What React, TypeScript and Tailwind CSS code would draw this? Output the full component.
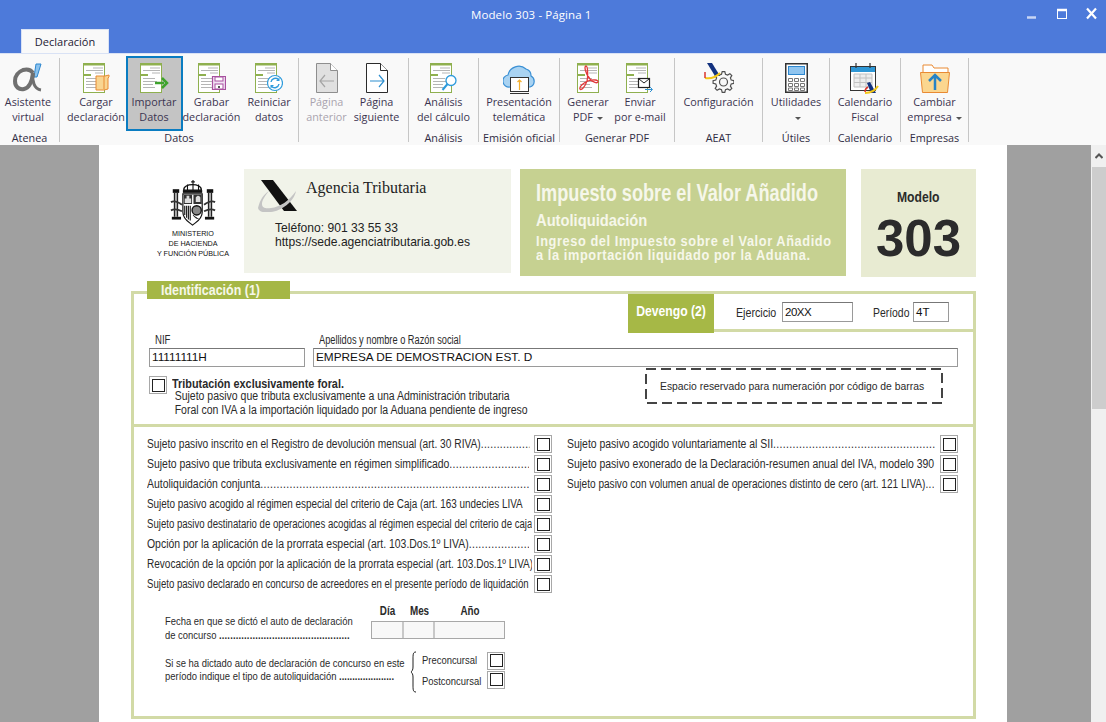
import React from "react";

const Doc = () => (
  <g>
    <rect x="0.5" y="0.5" width="21" height="29" fill="#fff" stroke="#8fb04f" />
    <rect x="0" y="0" width="22" height="2.5" fill="#8fb04f" />
    <rect x="0" y="11" width="8" height="2" fill="#8fb04f" />
    <path d="M10 5h10M3 7.5h17M12 10h8M3 15.5h12M3 18.5h14M3 21.5h10M3 24.5h12" stroke="#b5b5b5" />
  </g>
);

const Cargar = () => (
  <svg width="27" height="30" viewBox="0 0 27 30">
    <Doc />
    <path d="M13 13h9l4 -1v2l-1 1v11l-4 1h-8z" fill="#f9d591" stroke="#e98a33" />
    <path d="M21 13v13" stroke="#e98a33" />
  </svg>
);
const Importar = () => (
  <svg width="29" height="30" viewBox="0 0 29 30">
    <Doc />
    <path d="M15 20h9" stroke="#3ea32d" strokeWidth="2.5" />
    <path d="M22 15l5 5l-5 5" stroke="#3ea32d" strokeWidth="2.5" fill="none" />
  </svg>
);
const Grabar = () => (
  <svg width="28" height="30" viewBox="0 0 28 30">
    <Doc />
    <path d="M14.5 13.5h13v13h-13z" fill="#f2e3f4" stroke="#a8519f" strokeWidth="1.2" />
    <rect x="17" y="14" width="8" height="4" fill="#fff" stroke="#a8519f" />
    <rect x="17" y="21" width="8" height="5" fill="#fff" stroke="#a8519f" />
    <rect x="20" y="23" width="2" height="2" fill="#555" />
  </svg>
);
const Reiniciar = () => (
  <svg width="28" height="30" viewBox="0 0 28 30">
    <Doc />
    <circle cx="20" cy="20" r="7.5" fill="#fff" stroke="#2e9bdc" strokeWidth="1.2" />
    <path d="M16 19a4.5 4.5 0 0 1 7.5 -2.5M24 21a4.5 4.5 0 0 1 -7.5 2.5" fill="none" stroke="#2e9bdc" strokeWidth="1.4" />
    <path d="M24.5 14.5v3.5h-3.5zM15.5 25.5v-3.5h3.5z" fill="#2e9bdc" />
  </svg>
);
const Analisis = () => (
  <svg width="28" height="30" viewBox="0 0 28 30">
    <Doc />
    <circle cx="21" cy="17.5" r="5" fill="#fff" stroke="#2e9bdc" strokeWidth="1.3" />
    <path d="M17.5 21l-5 6" stroke="#2e9bdc" strokeWidth="2" />
  </svg>
);
const PageIcon = ({ on }: { on: boolean }) => {
  const s = on ? "#2b2b2b" : "#8e8e8e";
  const a = on ? "#2e8fd0" : "#a4a4a4";
  return (
    <svg width="22" height="30" viewBox="0 0 22 30">
      <path d="M0.5 0.5h14l7 7v22h-21z" fill={on ? "#fff" : "#e0e0e0"} stroke={s} />
      <path d="M14.5 0.5v7h7" fill="#fff" stroke={s} />
      {on ? (
        <path d="M4 18h14M13 12l5 6l-5 6" stroke={a} fill="none" strokeWidth="1.2" />
      ) : (
        <path d="M18 18h-14M9 12l-5 6l5 6" stroke={a} fill="none" strokeWidth="1.2" />
      )}
    </svg>
  );
};
const Cloud = () => (
  <svg width="33" height="31" viewBox="0 0 33 31">
    <path d="M7 24a6 6 0 0 1 -2 -12a11 11 0 0 1 18 -6a7 7 0 0 1 5 7a6 6 0 0 1 -1 11z" fill="#a9d3f2" stroke="#3b90d4" strokeWidth="1.2" />
    <rect x="7.5" y="14.5" width="18" height="14" fill="#fff" stroke="#333" />
    <path d="M7 30.5h19" stroke="#333" />
    <path d="M16.5 27v-10M14.5 19l2 -2l2 2" stroke="#f4b02e" fill="none" strokeWidth="1.2" />
  </svg>
);
const Pdf = () => (
  <svg width="22" height="30" viewBox="0 0 22 30">
    <Doc />
    <path d="M9 3c-2 0 -1 7 4 13c2 2.500 7 5 8 3c1 -2 -5 -3 -10 -1c-5 2 -9 6 -8 8c1 2 5 -2 7 -8c1 -4 1 -15 -1 -15z" fill="none" stroke="#e2393b" strokeWidth="1.3" />
  </svg>
);
const Enviar = () => (
  <svg width="28" height="30" viewBox="0 0 28 30">
    <Doc />
    <rect x="12.500" y="15.500" width="11" height="9" fill="#fff" stroke="#222" strokeWidth="1.2" />
    <path d="M13 16l5 4l5 -4" fill="none" stroke="#222" />
    <path d="M19 26.500h7M24 24l2.500 2.500l-2.500 2.500" stroke="#2e8fd0" fill="none" />
  </svg>
);
const Alpha = () => (
  <svg width="30" height="30" viewBox="0 0 30 30">
    <path d="M23 1h5l-4 13h-3z" fill="#8cc3ee" stroke="#2d87cf" />
    <path d="M20 10c-1 8 1 16 8 17" fill="none" stroke="#707070" strokeWidth="3" />
    <path d="M20 10c-2 -3 -6 -4 -10 -3c-5 2 -8 6 -8 11c0 6 4 9 9 8c5 -1 8 -8 9 -16" fill="none" stroke="#707070" strokeWidth="4" />
  </svg>
);
const gear = (() => {
  const cx = 19.5, cy = 19, n = 8;
  const pts: string[] = [];
  for (let i = 0; i < n; i++) {
    const a = (i / n) * Math.PI * 2;
    const step = (Math.PI * 2) / n;
    const list: [number, number][] = [
      [8, a - step * 0.32],
      [10.5, a - step * 0.16],
      [10.5, a + step * 0.16],
      [8, a + step * 0.32],
    ];
    list.forEach(([r, t]) => pts.push((cx + r * Math.cos(t)).toFixed(1) + "," + (cy + r * Math.sin(t)).toFixed(1)));
  }
  return pts.join(" ");
})();
const Config = () => (
  <svg width="30" height="30" viewBox="0 0 30 30">
    <polygon points={gear} fill="#f9f9f9" stroke="#4f4f4f" strokeWidth="1.2" />
    <circle cx="19.500" cy="19" r="4" fill="none" stroke="#4f4f4f" strokeWidth="1.2" />
    <path d="M3 0h5l8 13h-5z" fill="#13327f" />
    <path d="M1 15c5 1 11 -1 15 -5" stroke="#f3c718" strokeWidth="2" fill="none" />
    <path d="M1 9l0 6" stroke="#d8342b" strokeWidth="1.500" />
  </svg>
);
const Calc = () => (
  <svg width="23" height="30" viewBox="0 0 23 30">
    <rect x="0.750" y="0.750" width="21.500" height="28.500" fill="#fff" stroke="#333" strokeWidth="1.500" />
    <rect x="3.500" y="3.500" width="16" height="8" fill="#90c5ef" stroke="#2d87cf" />
    <path d="M3.500 15.500h4v3h-4zM9.500 15.500h4v3h-4zM15.500 15.500h4v3h-4zM3.500 20.500h4v3h-4zM9.500 20.500h4v3h-4zM15.500 20.500h4v3h-4zM3.500 25h4v2.500h-4zM9.500 25h4v2.500h-4zM15.500 25h4v2.500h-4z" fill="none" stroke="#777" />
  </svg>
);
const Calendar = () => (
  <svg width="30" height="31" viewBox="0 0 30 31">
    <rect x="0.500" y="3.500" width="25" height="24" fill="#fff" stroke="#333" />
    <rect x="1" y="4" width="24" height="5" fill="#2f97d5" />
    <path d="M6 0v5M20 0v5" stroke="#333" strokeWidth="1.200" />
    <path d="M4 11h18v13h-18zM4 15h18M4 19.500h18M10 11v13M16 11v13" fill="#eee" stroke="#c2c2c2" />
    <path d="M17 20l3 -1l6 11h-5z" fill="#13327f" />
    <path d="M15 30c5 0 10 -2 13 -7" stroke="#f3c718" strokeWidth="2" fill="none" />
    <path d="M18 24c-2 1 -3 3 -3 5" stroke="#d8342b" strokeWidth="1.500" fill="none" />
  </svg>
);
const Folder = () => (
  <svg width="30" height="30" viewBox="0 0 30 30">
    <path d="M3 9v-7h9l2 3h14v4" fill="#fff" stroke="#e98a33" />
    <path d="M0.500 9.500h29l-2 20h-25z" fill="#fbd68f" stroke="#e98a33" />
    <path d="M15 27v-15M9 18l6 -6l6 6" fill="none" stroke="#2683c6" strokeWidth="2.500" />
  </svg>
);

type Btn = { a: string; b?: string; w: number; icon: React.ReactNode; off?: boolean; sel?: boolean; caret?: boolean };
type Grp = { w: number; label?: string; btns: Btn[]; pad?: string };

const groups: Grp[] = [
  { w: 60, pad: "pr-[3px]", label: "Atenea", btns: [{ a: "Asistente", b: "virtual", w: 57, icon: <Alpha /> }] },
  {
    w: 239,
    pad: "pl-[6px]",
    label: "Datos",
    btns: [
      { a: "Cargar", b: "declaración", w: 59, icon: <Cargar /> },
      { a: "Importar", b: "Datos", w: 57, icon: <Importar />, sel: true },
      { a: "Grabar", b: "declaración", w: 58, icon: <Grabar /> },
      { a: "Reiniciar", b: "datos", w: 57, icon: <Reiniciar /> },
    ],
  },
  {
    w: 110,
    pad: "pr-[4px]",
    btns: [
      { a: "Página", b: "anterior", w: 50, icon: <PageIcon on={false} />, off: true },
      { a: "Página", b: "siguiente", w: 50, icon: <PageIcon on={true} /> },
    ],
  },
  { w: 70, label: "Análisis", btns: [{ a: "Análisis", b: "del cálculo", w: 66, icon: <Analisis /> }] },
  { w: 81, label: "Emisión oficial", btns: [{ a: "Presentación", b: "telemática", w: 76, icon: <Cloud /> }] },
  {
    w: 115,
    pad: "pr-[6px]",
    label: "Generar PDF",
    btns: [
      { a: "Generar", b: "PDF", w: 52, icon: <Pdf />, caret: true },
      { a: "Enviar", b: "por e-mail", w: 52, icon: <Enviar /> },
    ],
  },
  { w: 88, label: "AEAT", btns: [{ a: "Configuración", w: 80, icon: <Config /> }] },
  { w: 67, label: "Útiles", btns: [{ a: "Utilidades", w: 60, icon: <Calc />, caret: true }] },
  { w: 71, label: "Calendario", btns: [{ a: "Calendario", b: "Fiscal", w: 64, icon: <Calendar /> }] },
  { w: 68, label: "Empresas", btns: [{ a: "Cambiar", b: "empresa", w: 62, icon: <Folder />, caret: true }] },
];

const Caret = () => <span className="inline-block ml-1 align-middle w-0 h-0 border-x-[3px] border-x-transparent border-t-[3px] border-t-[#555]" />;

const RibbonButton = ({ b }: { b: Btn }) => (
  <div
    className={
      "flex flex-col items-center h-[75px] pt-[5px] border-2 box-border shrink-0 " +
      (b.sel ? "border-[#0a7cc1] bg-[#c4c4c4]" : "border-transparent")
    }
    style={{ width: b.w }}
  >
    <div className="h-[31px] flex items-start justify-center">{b.icon}</div>
    <div className={"text-center leading-[15px] whitespace-nowrap " + (b.off ? "text-[#a9a4ae]" : "text-[#3b3450]")}>
      <div>{b.a}</div>
      <div>
        {b.b}
        {b.caret && <Caret />}
      </div>
    </div>
  </div>
);

const Ribbon = () => (
  <div className="h-[92px] bg-[#f9f9f9] border-t border-t-[#d9e2f5] flex font-['Open_Sans',sans-serif] text-[10.8px]">
    {groups.map((g, i) => (
      <div key={i} className="flex flex-col border-r border-r-[#c6c6c6] h-[84px] mt-[4px] box-border shrink-0" style={{ width: g.w }}>
        <div className={"flex justify-center h-[75px] -mt-[2px] " + (g.pad ?? "")}>
          {g.btns.map((b, j) => (
            <RibbonButton key={j} b={b} />
          ))}
        </div>
        <div className="text-center text-[#302c44] leading-[14px] whitespace-nowrap">{g.label}</div>
      </div>
    ))}
  </div>
);

const Check = () => (
  <div className="w-[18px] h-[18px] border border-[#a8a8a8] flex items-center justify-center shrink-0 bg-white">
    <div className="w-[13px] h-[13px] border border-[#222]" />
  </div>
);

type RowD = { t: string; dots?: boolean; c: string };

const Row = ({ t, dots, c, w }: RowD & { w: number }) => (
  <div className="flex items-center h-[20px]" style={{ width: w }}>
    <div className="flex-1 min-w-0 overflow-hidden mr-[2px]">
      <div className={"origin-left flex overflow-hidden whitespace-nowrap leading-[18px] " + c}>
        <span className="shrink-0">{t}</span>
        {dots && <span className="overflow-hidden mr-[4px] tracking-[0.4px]">{".".repeat(120)}</span>}
      </div>
    </div>
    <Check />
  </div>
);

const left: RowD[] = [
  { t: "Sujeto pasivo inscrito en el Registro de devolución mensual (art. 30 RIVA)", dots: true, c: "w-[118%] scale-x-[.85]" },
  { t: "Sujeto pasivo que tributa exclusivamente en régimen simplificado", dots: true, c: "w-[115%] scale-x-[.87]" },
  { t: "Autoliquidación conjunta", dots: true, c: "w-[115%] scale-x-[.87]" },
  { t: "Sujeto pasivo acogido al régimen especial del criterio de Caja (art. 163 undecies LIVA", c: "w-[122%] scale-x-[.825]" },
  { t: "Sujeto pasivo destinatario de operaciones acogidas al régimen especial del criterio de caja", c: "w-[125%] scale-x-[.8]" },
  { t: "Opción por la aplicación de la prorrata especial (art. 103.Dos.1º LIVA)", dots: true, c: "w-[115%] scale-x-[.87]" },
  { t: "Revocación de la opción por la aplicación de la prorrata especial (art. 103.Dos.1º LIVA)", c: "w-[120%] scale-x-[.835]" },
  { t: "Sujeto pasivo declarado en concurso de acreedores en el presente período de liquidación", c: "w-[125%] scale-x-[.8]" },
];
const right: RowD[] = [
  { t: "Sujeto pasivo acogido voluntariamente al SII", dots: true, c: "w-[115%] scale-x-[.87]" },
  { t: "Sujeto pasivo exonerado de la Declaración-resumen anual del IVA, modelo 390", c: "w-[115%] scale-x-[.87]" },
  { t: "Sujeto pasivo con volumen anual de operaciones distinto de cero (art. 121 LIVA)", dots: true, c: "w-[119%] scale-x-[.84]" },
];

const Crest = () => (
  <svg width="50" height="50" viewBox="0 0 50 50">
    <path d="M15 11c-1 -8 20 -8 19 0z" fill="#fff" stroke="#111" strokeWidth="1.500" />
    <path d="M25 0v5M23 2h4M19 5v6M25 5v6M31 5v6" stroke="#111" strokeWidth="1.200" />
    <rect x="14" y="11" width="21" height="3" fill="#111" />
    <rect x="3" y="10" width="7" height="4" fill="#111" />
    <rect x="40" y="10" width="7" height="4" fill="#111" />
    <path d="M5 14v26M8 14v26M42 14v26M45 14v26" stroke="#222" strokeWidth="1.700" />
    <path d="M1 24c4 -2 8 0 12 3M49 24c-4 -2 -8 0 -12 3M1 33c4 -2 8 -1 12 1M49 33c-4 -2 -8 -1 -12 1" stroke="#333" strokeWidth="2" fill="none" />
    <rect x="2" y="40" width="10" height="3" fill="#111" />
    <rect x="38" y="40" width="10" height="3" fill="#111" />
    <path d="M14 15h21v20c0 8 -7 11 -10.500 14c-3.500 -3 -10.500 -6 -10.500 -14z" fill="#fff" stroke="#111" strokeWidth="1.300" />
    <path d="M15 16h9v10h-9zM25.500 16h9v10h-9z" fill="#333" />
    <path d="M18 17h3v3h2v5h-7v-5h2zM28 19c2 -3 4 -2 5 0v5h-5z" fill="#ddd" />
    <path d="M16 28v10M18 28v13M20 28v15M22 28v16" stroke="#222" strokeWidth="1.300" />
    <circle cx="29" cy="33" r="5" fill="#888" stroke="#111" strokeWidth="1.500" />
    <path d="M25 38c2 3 4 4 6 4" stroke="#333" />
  </svg>
);

const Agency = () => (
  <svg width="40" height="32" viewBox="0 0 40 32" className="shrink-0">
    <path d="M3 0h12l24 31h-13z" fill="#111" />
    <path d="M0 28c2 -8 5 -13 11 -17c-4 5 -7 9 -7 13c0 4 4 5 9 4c9 -1 18 -7 25 -17c-2 11 -15 20 -25 21c-7 1 -12 0 -13 -4z" fill="#c4c4c4" />
  </svg>
);

const narrow = "font-['Liberation_Sans',sans-serif]";

export default function App() {
  return (
    <div className="w-[1106px] h-[722px] overflow-hidden flex flex-col bg-[#a0a0a0]">
      <div className="h-[53px] bg-[#4d7ada] flex flex-col shrink-0">
        <div className="flex h-[29px] items-start font-['Open_Sans',sans-serif]">
          <div className="pl-[471px] text-white text-[11.5px] leading-[16px] pt-[7px] tracking-[0.1px] whitespace-nowrap">Modelo 303 - Página 1</div>
          <div className="flex-1" />
          <svg width="72" height="20" viewBox="0 0 72 20" className="mr-[7px] shrink-0">
            <path d="M0 17.500h9" stroke="#c8d6f4" strokeWidth="2.500" />
            <rect x="30.500" y="9.500" width="9" height="9" fill="none" stroke="#fff" />
            <path d="M30 10h10" stroke="#fff" strokeWidth="2.500" />
            <path d="M60 8.500l9 10M69 8.500l-9 10" stroke="#fff" strokeWidth="2.200" />
          </svg>
        </div>
        <div className="h-[24px] pl-[21px] flex">
          <div className="w-[88px] h-[24px] bg-[#f9f9f9] border border-b-0 border-[#d9e2f5] text-center text-[11px] leading-[24px] font-['Open_Sans',sans-serif] text-[#1e1a34]">Declaración</div>
        </div>
      </div>
      <Ribbon />
      <div className="flex-1 flex min-h-0">
        <div className="w-[1091px] shrink-0 pl-[99px] overflow-hidden">
          <div className={"w-[908px] h-[577px] bg-white pl-[32px] pt-[24px] overflow-hidden text-[#2a2a2a] text-[12px] " + narrow}>
            <div className="flex items-start h-[108px]">
              <div className="w-[113px] h-[90px] flex flex-col items-center pt-[11px] pl-[11px]">
                <Crest />
                <div className="font-['Liberation_Sans',sans-serif] text-[7.2px] leading-[10px] text-center text-[#111] whitespace-nowrap mt-[3px]">
                  MINISTERIO<br />DE HACIENDA<br />Y FUNCIÓN PÚBLICA
                </div>
              </div>
              <div className="w-[267px] h-[104px] bg-[#f1f3e9] pl-[14px] pt-[11px] flex flex-col">
                <div className="flex items-start">
                  <Agency />
                  <span className="ml-[8px] -mt-[3px] font-['Liberation_Serif',serif] text-[16px] leading-[22px] text-[#222] whitespace-nowrap">Agencia Tributaria</span>
                </div>
                <div className="mt-[9px] ml-[17px] font-['Liberation_Sans',sans-serif] text-[12.1px] leading-[14px] text-[#222] whitespace-nowrap">
                  Teléfono: 901 33 55 33
                  <br />
                  https://sede.agenciatributaria.gob.es
                </div>
              </div>
              <div className="w-[326px] h-[107px] ml-[9px] bg-[#c6d191] pl-[16px] pt-[10px] text-[#f6f7ea] font-bold whitespace-nowrap">
                <div className="w-[127%] origin-left scale-x-[.79] text-[23px] leading-[28px]">Impuesto sobre el Valor Añadido</div>
                <div className="w-[109%] origin-left scale-x-[.92] text-[16px] leading-[20px] mt-[4px]">Autoliquidación</div>
                <div className="w-[110%] origin-left scale-x-[.913] text-[14px] leading-[14px] mt-[3px] tracking-[0.65px]">
                  Ingreso del Impuesto sobre el Valor Añadido
                  <br />a la importación liquidado por la Aduana.
                </div>
              </div>
              <div className="w-[115px] h-[108px] ml-[15px] bg-[#e8ebd2] flex flex-col items-center pt-[18px] font-bold text-[#2b2b2b]">
                <div className="text-[15px] leading-[20px] scale-x-[.81]">Modelo</div>
                <div className="font-['Liberation_Sans',sans-serif] text-[51px] leading-[54px] mt-[5px]">303</div>
              </div>
            </div>

            <div className="relative mt-[14px] w-[845px] h-[428px] border-[3px] border-[#d2daa6] box-border">
              <div className="absolute -top-[13px] left-[13px] w-[143px] h-[18px] bg-[#a5b746] text-[#f6f7ea] font-bold text-[14px] leading-[19px] pl-[14px]">
                <div className="origin-left scale-x-[.89] whitespace-nowrap">Identificación (1)</div>
              </div>
              <div className="flex justify-end h-[38px]">
                <div className="w-[86px] h-[39px] bg-[#a6b846] text-white font-bold text-[14px] leading-[34px] flex justify-center shrink-0 whitespace-nowrap">
                  <span className="scale-x-[.87]">Devengo (2)</span>
                </div>
                <div className="w-[259px] border-b-[3px] border-[#d2daa6] flex items-start pt-[8px] pl-[22px] text-[13px] leading-[21px]">
                  <span className="block w-[46px] origin-left scale-x-[.82] whitespace-nowrap">Ejercicio</span>
                  <div className="w-[71px] h-[20px] border border-[#9a9a9a] border-t-[#777] font-['Liberation_Sans',sans-serif] text-[11.5px] leading-[18px] pl-[2px] text-[#111] tracking-[-0.5px]">20XX</div>
                  <span className="block ml-[20px] w-[40px] origin-left scale-x-[.8] whitespace-nowrap">Período</span>
                  <div className="w-[36px] h-[20px] border border-[#9a9a9a] border-t-[#777] font-['Liberation_Sans',sans-serif] text-[11.5px] leading-[18px] pl-[2px] text-[#111]">4T</div>
                </div>
              </div>

              <div className="h-[95px] relative border-b-[3px] border-[#d2daa6] box-border pl-[15px] pt-[2px]">
                <div className="flex h-[13px] leading-[13px]">
                  <div className="w-[158px] pl-[6px]">
                    <div className="origin-left scale-x-[.8] whitespace-nowrap">NIF</div>
                  </div>
                  <div className="pl-[12px]">
                    <div className="origin-left scale-x-[.77] whitespace-nowrap">Apellidos y nombre o Razón social</div>
                  </div>
                </div>
                <div className="flex gap-[8px] mt-[1px] font-['Liberation_Sans',sans-serif] text-[11.8px] text-[#111]">
                  <div className="w-[156px] h-[19px] border border-[#9a9a9a] border-t-[#777] leading-[17px] pl-[2px]">11111111H</div>
                  <div className="w-[645px] h-[19px] border border-[#9a9a9a] border-t-[#777] leading-[17px] pl-[2px]">EMPRESA DE DEMOSTRACION EST. D</div>
                </div>
                <div className="flex mt-[9px] items-start">
                  <Check />
                  <div className="ml-[5px]">
                    <div className="w-[120%] mt-[1px] origin-left scale-x-[.835] font-bold text-[13px] leading-[13px] whitespace-nowrap">Tributación exclusivamente foral.</div>
                    <div className="w-[115%] origin-left scale-x-[.875] pl-[3px] leading-[14px] -mt-[1px] whitespace-nowrap">
                      Sujeto pasivo que tributa exclusivamente a una Administración tributaria
                      <br />
                      Foral con IVA a la importación liquidado por la Aduana pendiente de ingreso
                    </div>
                  </div>
                </div>
                <div className="absolute left-[511px] top-[36px] w-[298px] h-[36px] pl-[15px] text-[11.5px] leading-[36px]">
                  <svg width="298" height="36" viewBox="0 0 298 36" className="absolute left-0 top-0">
                    <rect x="1" y="1" width="296" height="34" fill="none" stroke="#444" strokeWidth="2" strokeDasharray="10 5" />
                  </svg>
                  <div className="origin-left scale-x-[.9] whitespace-nowrap">Espacio reservado para numeración por código de barras</div>
                </div>
              </div>

              <div className="flex pl-[13px] pt-[7px]">
                <div className="w-[405px]">
                  {left.map((r, i) => (
                    <Row key={i} {...r} w={405} />
                  ))}
                </div>
                <div className="w-[391px] ml-[15px]">
                  {right.map((r, i) => (
                    <Row key={i} {...r} w={391} />
                  ))}
                </div>
              </div>

              <div className="pl-[31px] mt-[10px] text-[11.5px] leading-[14px]">
                <div className="flex items-start">
                  <div className="w-[206px] mt-[10px]">
                    <div className="w-[122%] origin-left scale-x-[.82] whitespace-nowrap">
                      Fecha en que se dictó el auto de declaración
                      <br />
                      de concurso <span className="tracking-[0.2px] font-bold">...............................................</span>
                    </div>
                  </div>
                  <div className="w-[134px]">
                    <div className="flex font-bold text-[12px] h-[17px] leading-[14px]">
                      <span className="w-[33px] text-center scale-x-[.82]">Día</span>
                      <span className="w-[31px] text-center scale-x-[.82]">Mes</span>
                      <span className="w-[70px] text-center scale-x-[.82]">Año</span>
                    </div>
                    <div className="flex h-[18px] border border-[#a8a8a8] bg-[#f8f8f8]">
                      <div className="w-[32px] border-r-2 border-[#c8c8c8]" />
                      <div className="w-[31px] border-r-2 border-[#c8c8c8]" />
                    </div>
                  </div>
                </div>
                <div className="flex mt-[9px] items-start">
                  <div className="w-[245px] mt-[6px]">
                    <div className="w-[122%] origin-left scale-x-[.82] whitespace-nowrap leading-[13px]">
                      Si se ha dictado auto de declaración de concurso en este
                      <br />
                      período indique el tipo de autoliquidación <span className="font-bold">.....................</span>
                    </div>
                  </div>
                  <svg width="8" height="42" viewBox="0 0 8 42" className="shrink-0">
                    <path d="M6 1c-3 0 -3 2 -3 8v7c0 3 -1 4 -2 5c1 1 2 2 2 5v7c0 6 0 8 3 8" fill="none" stroke="#222" />
                  </svg>
                  <div className="ml-[4px] w-[83px]">
                    <div className="flex h-[19px] items-center justify-between">
                      <span className="block w-[65px] origin-left scale-x-[.82] whitespace-nowrap -mt-[2px]">Preconcursal</span>
                      <Check />
                    </div>
                    <div className="flex h-[19px] items-center justify-between">
                      <span className="block w-[65px] origin-left scale-x-[.82] whitespace-nowrap mt-[2px]">Postconcursal</span>
                      <Check />
                    </div>
                  </div>
                </div>
              </div>
            </div>
          </div>
        </div>
        <div className="w-[15px] bg-[#f0f0f0] flex flex-col pl-[1px]">
          <div className="h-[22px] flex items-center justify-center">
            <svg width="8" height="6" viewBox="0 0 8 6">
              <path d="M0.500 5l3.500 -3.500l3.500 3.500" fill="none" stroke="#555" strokeWidth="2" />
            </svg>
          </div>
          <div className="h-[242px] bg-[#cdcdcd]" />
        </div>
      </div>
    </div>
  );
}
